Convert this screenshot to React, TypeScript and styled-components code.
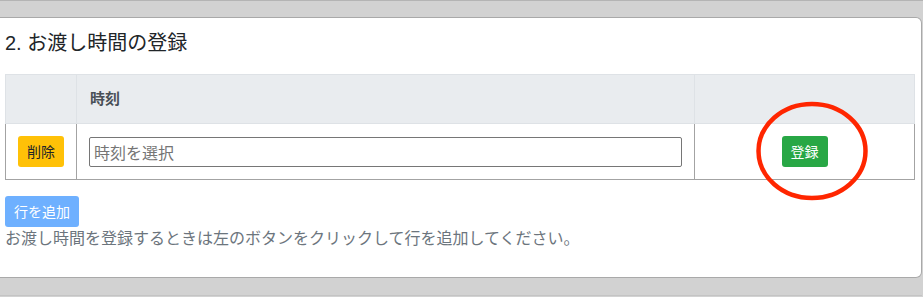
import React from 'react'
import styled, { createGlobalStyle } from 'styled-components'

const GlobalStyle = createGlobalStyle`
	html, body {
		margin: 0;
		padding: 0;
		background: #d2d2d2;
	}
	body {
		font-family: "Liberation Sans", "Noto Sans CJK JP", sans-serif;
		color: #212529;
	}
`

const Page = styled.div`
	width: 923px;
	height: 297px;
	overflow: hidden;
	border-top: 1px solid #b4b4b4;
	box-sizing: border-box;
`

const Card = styled.section`
	margin-top: 16px;
	width: 922px;
	box-sizing: border-box;
	background: #ffffff;
	border: 1px solid #a9a9a9;
	border-left: none;
	border-radius: 0 6px 6px 0;
	padding: 13px 6px 26px 5px;
`

const NextCard = styled.div`
	margin-top: 17px;
	height: 10px;
	width: 922px;
	border-top: 1px solid #c4c4c4;
	background: #d2d2d2;
`

const Title = styled.h2`
	margin: 0 0 19px;
	font-size: 20px;
	font-weight: 400;
	line-height: 24px;
	color: #212529;
`

const Table = styled.table`
	width: 910px;
	border-collapse: collapse;
	margin-bottom: 16px;
	table-layout: fixed;
`

const Col = styled.col<{ size?: number }>`
	width: ${({ size }) => (size ? `${size}px` : 'auto')};
`

const HeadCell = styled.th`
	background: #e9ecef;
	border: 1px solid #dee2e6;
	padding: 12px 13px;
	height: 24px;
	text-align: left;
	font-size: 15px;
	font-weight: 700;
	line-height: 24px;
	color: #495057;
`

const Cell = styled.td<{ align?: string }>`
	position: relative;
	border: 1px solid #a3a3a3;
	padding: 12px;
	text-align: ${({ align }) => align || 'left'};
	vertical-align: middle;
	height: 31px;
`

const Button = styled.button<{ tone: 'warning' | 'success' | 'primary' }>`
	display: inline-block;
	box-sizing: border-box;
	height: 31px;
	padding: 0 8px;
	border: 1px solid transparent;
	border-radius: 3px;
	font-family: "Noto Sans CJK JP", sans-serif;
	font-size: 14px;
	line-height: 29px;
	cursor: pointer;
	background: ${({ tone }) =>
		tone === 'warning' ? '#ffc107' : tone === 'success' ? '#28a745' : '#6eb0ff'};
	color: ${({ tone }) => (tone === 'warning' ? '#212529' : '#ffffff')};
	vertical-align: middle;
`

const TimeInput = styled.input`
	display: block;
	width: 100%;
	box-sizing: border-box;
	height: 30px;
	margin-top: 1px;
	padding: 0 4px;
	border: 1px solid #767676;
	border-radius: 2px;
	font-family: "Noto Sans CJK JP", sans-serif;
	font-size: 16px;
	color: #212529;
	&::placeholder {
		color: #757575;
	}
`

const Hint = styled.p`
	margin: 0;
	font-size: 16px;
	line-height: 24px;
	color: #6c757d;
`

const Marker = styled.svg`
	position: absolute;
	left: 50%;
	top: 50%;
	width: 116px;
	height: 104px;
	margin-left: -51px;
	margin-top: -53px;
	pointer-events: none;
	overflow: visible;
`

export default function App() {
	return (
		<>
			<GlobalStyle />
			<Page>
				<Card>
					<Title>2. お渡し時間の登録</Title>
					<Table>
						<colgroup>
							<Col size={71} />
							<Col size={618} />
							<Col />
						</colgroup>
						<thead>
							<tr>
								<HeadCell />
								<HeadCell>時刻</HeadCell>
								<HeadCell />
							</tr>
						</thead>
						<tbody>
							<tr>
								<Cell align="center">
									<Button tone="warning">削除</Button>
								</Cell>
								<Cell>
									<TimeInput placeholder="時刻を選択" />
								</Cell>
								<Cell align="center">
									<Button tone="success">登録</Button>
									<Marker viewBox="0 0 116 104">
										<ellipse
											cx="58"
											cy="52"
											rx="53.5"
											ry="47"
											fill="none"
											stroke="#ff2600"
											strokeWidth="4.5"
										/>
									</Marker>
								</Cell>
							</tr>
						</tbody>
					</Table>
					<Button tone="primary" disabled>行を追加</Button>
					<Hint>お渡し時間を登録するときは左のボタンをクリックして行を追加してください。</Hint>
				</Card>
				<NextCard />
			</Page>
		</>
	)
}
